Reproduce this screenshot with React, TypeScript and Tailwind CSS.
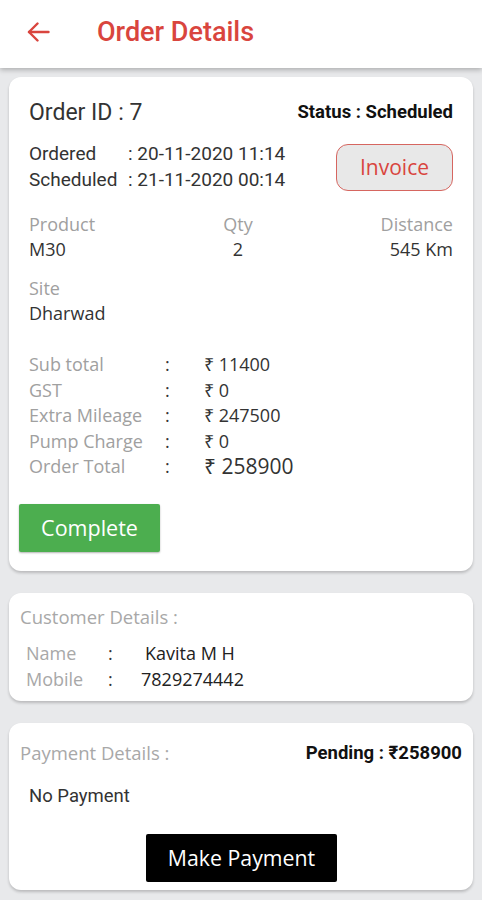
import React from "react";

const roboto = { fontFamily: "Roboto, 'Liberation Sans', sans-serif" };
const open = { fontFamily: "'Open Sans', 'Liberation Sans', sans-serif" };

export default function App() {
  return (
    <div className="w-[482px] min-h-[900px] bg-[#e8e9eb]" style={open}>
      <header className="h-[68px] bg-white flex items-center shadow-[0_2px_5px_rgba(0,0,0,0.25)] relative z-10">
        <svg className="ml-[27px] -mt-[4px]" width="23" height="20" viewBox="0 0 23 20" fill="none" stroke="#d9453e" strokeWidth="2.4" strokeLinecap="round" strokeLinejoin="round">
          <path d="M21.5 10H2" />
          <path d="M10.5 1.5L2 10l8.5 8.5" />
        </svg>
        <h1 className="ml-[47px] -mt-[3px] text-[27px] font-medium text-[#d9453e] leading-none" style={roboto}>
          Order Details
        </h1>
      </header>

      <div className="px-[9px] pt-[9px] pb-[10px] flex flex-col gap-[22px]">
        {/* Card 1 */}
        <section className="bg-white rounded-[12px] shadow-[0_2px_3px_rgba(0,0,0,0.2)] pl-[20px] pr-[20px] pt-[22px] pb-[19px]">
          <div className="flex items-center justify-between h-[28px]" style={roboto}>
            <span className="text-[23px] text-[#333]">Order ID : 7</span>
            <span className="text-[18.5px] font-bold text-[#111]">Status : Scheduled</span>
          </div>
          <div className="flex items-center justify-between mt-[14px]" style={roboto}>
            <div className="text-[19px] text-[#333] leading-[26px]">
              <div className="flex">
                <span className="w-[99px]">Ordered</span>
                <span>: 20-11-2020 11:14</span>
              </div>
              <div className="flex">
                <span className="w-[99px]">Scheduled</span>
                <span>: 21-11-2020 00:14</span>
              </div>
            </div>
            <button
              className="w-[117px] h-[47px] rounded-[12px] border-[1.5px] border-[#d66660] bg-[#e8e8e8] text-[#d9453e] text-[21px] leading-none"
              style={open}
            >
              Invoice
            </button>
          </div>

          <div className="grid grid-cols-3 mt-[19px] text-[18px] leading-[25px]">
            <div>
              <div className="text-[#a0a0a0]">Product</div>
              <div className="text-[#333]">M30</div>
            </div>
            <div className="text-center mr-[6px]">
              <div className="text-[#a0a0a0]">Qty</div>
              <div className="text-[#333]">2</div>
            </div>
            <div className="text-right">
              <div className="text-[#a0a0a0]">Distance</div>
              <div className="text-[#333]">545 Km</div>
            </div>
          </div>

          <div className="mt-[14px] text-[18px] leading-[25px]">
            <div className="text-[#a0a0a0]">Site</div>
            <div className="text-[#333]">Dharwad</div>
          </div>

          <div className="mt-[26px] text-[18px]">
            {[
              ["Sub total", "₹ 11400"],
              ["GST", "₹ 0"],
              ["Extra Mileage", "₹ 247500"],
              ["Pump Charge", "₹ 0"],
            ].map(([k, v]) => (
              <div className="flex items-center h-[25.5px]" key={k}>
                <span className="w-[136px] text-[#a0a0a0]">{k}</span>
                <span className="w-[39px] text-[#333]">:</span>
                <span className="text-[#333]">{v}</span>
              </div>
            ))}
            <div className="flex items-center h-[25.5px]">
              <span className="w-[136px] text-[#a0a0a0]">Order Total</span>
              <span className="w-[39px] text-[#333]">:</span>
              <span className="text-[#333] text-[21px]">₹ 258900</span>
            </div>
          </div>

          <button className="block mt-[24.5px] -ml-[10px] w-[141px] h-[48px] rounded-[2px] bg-[#4cae4f] text-white text-[21.5px] leading-none shadow-[0_1px_2px_rgba(0,0,0,0.3)]">
            Complete
          </button>
        </section>

        {/* Card 2 */}
        <section className="bg-white rounded-[12px] shadow-[0_2px_3px_rgba(0,0,0,0.2)] pl-[11px] pr-[11px] pt-[11px] pb-[9px]">
          <div className="text-[18.5px] leading-[26px] text-[#a8a8a8]">Customer Details :</div>
          <div className="mt-[10px] pl-[6px] text-[18px] leading-[26px]">
            <div className="flex">
              <span className="w-[82px] text-[#a8a8a8]">Name</span>
              <span className="w-[37px] text-[#333]">:</span>
              <span className="text-[#222]">Kavita M H</span>
            </div>
            <div className="flex">
              <span className="w-[82px] text-[#a8a8a8]">Mobile</span>
              <span className="w-[33px] text-[#333]">:</span>
              <span className="text-[#222]">7829274442</span>
            </div>
          </div>
        </section>

        {/* Card 3 */}
        <section className="bg-white rounded-[12px] shadow-[0_2px_3px_rgba(0,0,0,0.2)] pl-[11px] pr-[11px] pt-[17px] pb-[8px]">
          <div className="flex items-center justify-between h-[26px]">
            <span className="text-[18.5px] text-[#a8a8a8]">Payment Details :</span>
            <span className="text-[18.5px] font-bold text-[#111] translate-y-[1px]" style={roboto}>Pending : ₹258900</span>
          </div>
          <div className="mt-[17px] pl-[9px] text-[18.5px] leading-[26px] text-[#333]" style={roboto}>No Payment</div>
          <div className="flex justify-center mt-[25px]">
            <button className="w-[191px] h-[48px] rounded-[2px] bg-black text-white text-[21.3px] leading-none ml-[1px]">
              Make Payment
            </button>
          </div>
        </section>
      </div>
    </div>
  );
}
